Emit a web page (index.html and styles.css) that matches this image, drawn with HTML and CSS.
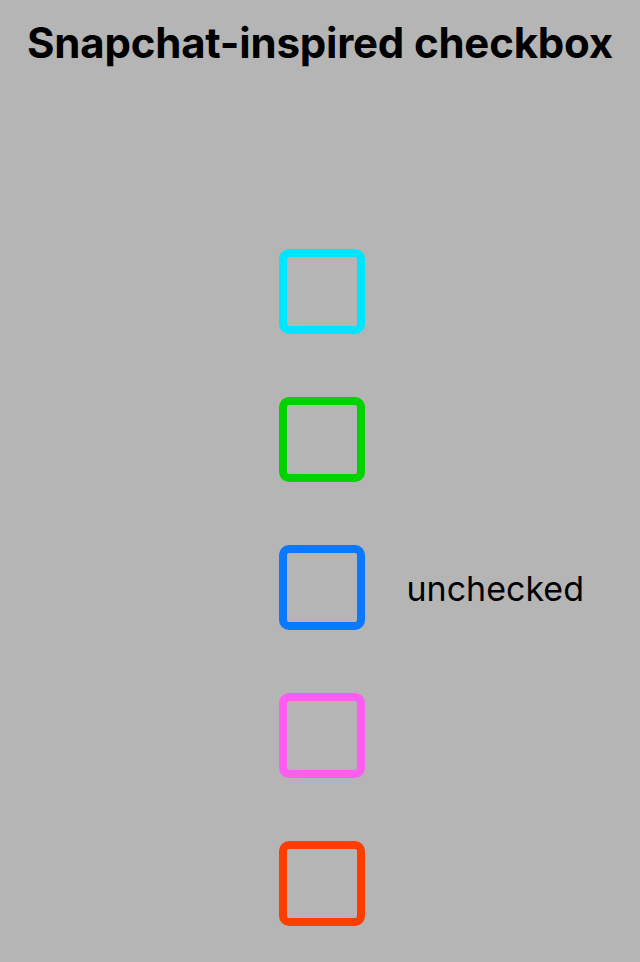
FILE: index.html
```html
<!DOCTYPE html>
<html lang="en">
<head>
    <meta charset="UTF-8">
    <meta name="viewport" content="width=device-width, initial-scale=1.0">
    <title>Snapchat-inspired checkbox</title>
    <link rel="stylesheet" href="styles.css">
</head>
<body>
    <!-- Title -->
    <h1 class="title">Snapchat-inspired checkbox</h1>

    <!-- Checkbox list -->
    <main class="checkbox-list">
        <div class="checkbox-row">
            <span class="checkbox cyan"></span>
        </div>
        <div class="checkbox-row">
            <span class="checkbox green"></span>
        </div>
        <div class="checkbox-row">
            <span class="checkbox blue"></span>
            <span class="checkbox-label">unchecked</span>
        </div>
        <div class="checkbox-row">
            <span class="checkbox pink"></span>
        </div>
        <div class="checkbox-row">
            <span class="checkbox red"></span>
        </div>
    </main>
</body>
</html>
```

FILE: styles.css
```css
/* General Reset */
* {
    margin: 0;
    padding: 0;
    box-sizing: border-box;
}

body {
    font-family: Inter, "Liberation Sans", Arial, sans-serif;
    background-color: #b5b5b5;
    color: #000;
    width: 640px;
    height: 962px;
    overflow: hidden;
}

/* Title */
.title {
    font-size: 42px;
    font-weight: bold;
    text-align: center;
    line-height: 48px;
    padding-top: 19px;
    letter-spacing: -0.2px;
}

/* Checkbox list */
.checkbox-list {
    display: flex;
    flex-direction: column;
    align-items: center;
    gap: 63px;
    margin-top: 182px;
    padding-left: 3px;
}

.checkbox-row {
    position: relative;
    display: flex;
    align-items: center;
}

.checkbox {
    display: block;
    width: 86px;
    height: 85px;
    border: 8px solid;
    border-radius: 10px;
}

.cyan { border-color: #00e5ff; }
.green { border-color: #00d300; }
.blue { border-color: #0a78ff; }
.pink { border-color: #ff5cf2; }
.red { border-color: #ff3d00; }

.checkbox-label {
    position: absolute;
    left: 128px;
    top: 50%;
    transform: translateY(-50%);
    font-size: 34px;
    white-space: nowrap;
}
```
